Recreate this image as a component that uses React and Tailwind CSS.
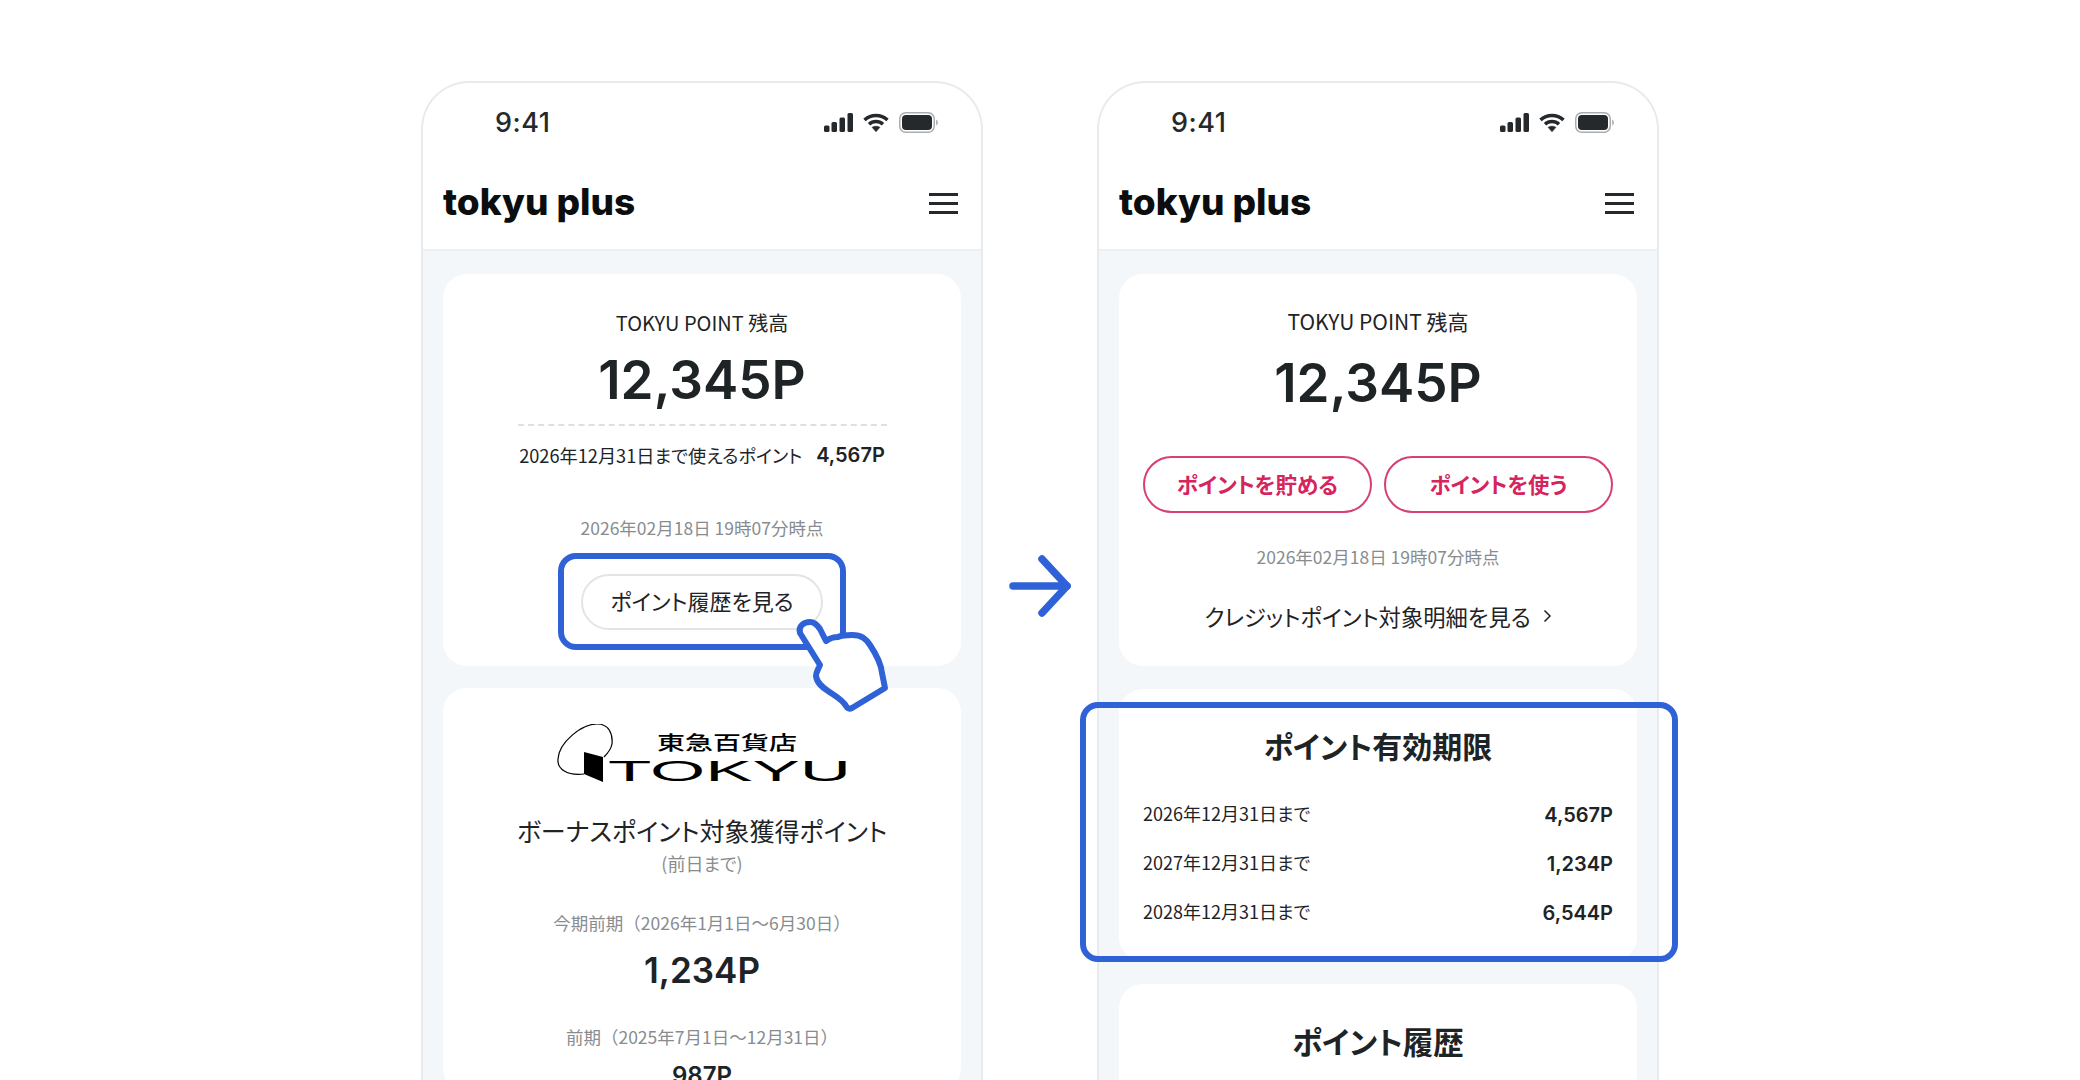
const latin = "font-['Inter','Noto_Sans_CJK_JP',sans-serif]";
const palt = "[font-feature-settings:'palt']";

function StatusBar() {
  return (
    <div className="flex h-[78px] items-center justify-between pl-[72px] pr-[43px]">
      <span className={`${latin} text-[27px] font-medium leading-none tracking-[0.5px] text-[#26292b]`}>9:41</span>
      <div className="flex items-center gap-[10px]">
        <svg width="29" height="19" viewBox="0 0 29 19" className="fill-[#26292b]">
          <rect x="0" y="12.500" width="5.500" height="6.500" rx="1.500" />
          <rect x="7.500" y="9" width="5.500" height="10" rx="1.500" />
          <rect x="15.500" y="4.500" width="5.500" height="14.500" rx="1.500" />
          <rect x="23.500" y="0" width="5.500" height="19" rx="1.500" />
        </svg>
        <svg width="26" height="19" viewBox="0 0 26 19" fill="none" className="stroke-[#26292b]">
          <path d="M1.500 7C8 .9 18 .9 24.500 7" strokeWidth="3.500" />
          <path d="M6 11.200C10 7.500 16 7.500 20 11.200" strokeWidth="3.500" />
          <path d="M9 14.300C11 12.800 15 12.800 17 14.300L13 18.800Z" className="fill-[#26292b]" strokeWidth="0.500" />
        </svg>
        <svg width="39" height="21" viewBox="0 0 39 21">
          <rect x="0.750" y="0.750" width="34.500" height="19.500" rx="6" fill="none" stroke="#a9adb0" strokeWidth="1.500" />
          <rect x="3" y="3" width="30" height="15" rx="4" className="fill-[#26292b]" />
          <path d="M37 7.500C38 7.800 39 9 39 10.500C39 12 38 13.200 37 13.500Z" fill="#b5b8ba" />
        </svg>
      </div>
    </div>
  );
}

function Header() {
  return (
    <div className="flex h-[90px] items-center justify-between border-b-2 border-[#edf0f2] pl-[20px] pr-[23px]">
      <span className="-mt-[8px] font-['Inter',sans-serif] text-[37px] font-extrabold leading-none tracking-[0px] text-[#0c0d0e]">tokyu plus</span>
      <div className="-mt-[3px] flex w-[29px] flex-col gap-[6px]">
        <div className="h-[3px] bg-[#26292b]" />
        <div className="h-[3px] bg-[#26292b]" />
        <div className="h-[3px] bg-[#26292b]" />
      </div>
    </div>
  );
}

function Hand() {
  return (
    <svg width="120" height="130" viewBox="0 0 120 130" className="absolute left-[199px] top-[17px]">
      <path
        d="M20 42C18 35 24 31 30 31C35 31 38 35 40 38L46 50C50 47 54 46 58 46C62 44 68 44 72 44C82 44 86 48 90 54C96 63 101 72 102 82L105 97L72 117Q68 119 66 115C62 108 55 105 48 100C42 96 37 92 36 85C36 81 38 79 40 74Z"
        fill="#ffffff"
        stroke="#2f62d6"
        strokeWidth="6"
        strokeLinejoin="round"
      />
    </svg>
  );
}

function TokyuLogo() {
  return (
    <svg width="296" height="66" viewBox="0 0 296 66" className="ml-[114px] block">
      <path d="M27 50C10 52 0 45 1 35C2 18 25 0 40 0C52 0 56 10 55 20C54 26 50 30 47 33" fill="none" stroke="#000000" strokeWidth="1.200" />
      <path d="M27 28L46 33V58L27 50Z" fill="#000000" />
      <text x="100" y="26" textLength="140" lengthAdjust="spacingAndGlyphs" className="font-['Noto_Sans_CJK_JP',sans-serif] fill-black text-[19px] font-medium">東急百貨店</text>
      <text x="51" y="57" textLength="243" lengthAdjust="spacingAndGlyphs" className="font-['Liberation_Sans',sans-serif] fill-black text-[30px]">TOKYU</text>
    </svg>
  );
}

function LeftPhone() {
  return (
    <div className="h-[1100px] w-[562px] shrink-0 rounded-t-[48px] border-2 border-b-0 border-[#e8ebee] bg-white">
      <StatusBar />
      <Header />
      <div className="flex h-full flex-col gap-[22px] bg-[#f4f7f9] px-[20px] pt-[23px]">
        <section className="rounded-[24px] bg-white pb-[36px] pt-[35px] text-center">
          <p className="text-[20px] leading-[28px]">TOKYU POINT 残高</p>
          <p className={`${latin} mt-[11px] text-[53px] font-semibold leading-[64px]`}>12,345P</p>
          <div className="mx-auto mt-[12px] w-[369px] border-t-2 border-dashed border-[#dddfe1]" />
          <div className="mt-[15px] flex items-center justify-center gap-[14px] leading-[28px]">
            <span className="text-[18.200px]">2026年12月31日まで使えるポイント</span>
            <span className={`${latin} text-[20px] font-semibold`}>4,567P</span>
          </div>
          <p className="mt-[47px] text-[17.500px] leading-[24px] text-[#888c8f]">2026年02月18日 19時07分時点</p>
          <div className="relative mx-auto mt-[34px] w-[242px]">
            <div className="flex h-[56px] items-center justify-center rounded-full border-2 border-[#e3e4e5] pb-[4px] text-[22px]">ポイント履歴を見る</div>
            <div className="absolute -inset-x-[23px] -bottom-[20px] -top-[21px] rounded-[18px] border-[6px] border-[#2f62d6]" />
            <Hand />
          </div>
        </section>
        <section className="rounded-[24px] bg-white pt-[36px] text-center">
          <TokyuLogo />
          <p className="mt-[25px] text-[25px] leading-[30px]">ボーナスポイント対象獲得ポイント</p>
          <p className="mt-[6px] text-[18px] leading-[24px] text-[#888c8f]">(前日まで)</p>
          <p className="mt-[36px] text-[17.500px] leading-[24px] text-[#888c8f] [font-feature-settings:normal]">今期前期（2026年1月1日〜6月30日）</p>
          <p className={`${latin} mt-[13px] text-[35px] font-semibold leading-[44px]`}>1,234P</p>
          <p className="mt-[33px] text-[17.500px] leading-[24px] text-[#888c8f] [font-feature-settings:normal]">前期（2025年7月1日〜12月31日）</p>
          <p className={`${latin} mt-[11px] text-[24px] font-semibold leading-[32px]`}>987P</p>
        </section>
      </div>
    </div>
  );
}

function PinkButton({ label }) {
  return (
    <div className="flex h-[57px] w-[229px] items-center justify-center rounded-full border-2 border-[#d8406f] text-[21.500px] font-bold text-[#d6245c]">
      {label}
    </div>
  );
}

const limits = [
  { date: "2026年12月31日まで", point: "4,567P" },
  { date: "2027年12月31日まで", point: "1,234P" },
  { date: "2028年12月31日まで", point: "6,544P" },
];

function RightPhone() {
  return (
    <div className="h-[1100px] w-[562px] shrink-0 rounded-t-[48px] border-2 border-b-0 border-[#e8ebee] bg-white">
      <StatusBar />
      <Header />
      <div className="flex h-full flex-col gap-[23px] bg-[#f4f7f9] px-[20px] pt-[23px]">
        <section className="rounded-[24px] bg-white pb-[36px] pt-[33px] text-center">
          <p className="text-[21px] leading-[28px]">TOKYU POINT 残高</p>
          <p className={`${latin} mt-[16px] text-[53px] font-semibold leading-[64px]`}>12,345P</p>
          <div className="mt-[41px] flex justify-center gap-[12px]">
            <PinkButton label="ポイントを貯める" />
            <PinkButton label="ポイントを使う" />
          </div>
          <p className="mt-[32px] text-[17.500px] leading-[24px] text-[#888c8f]">2026年02月18日 19時07分時点</p>
          <div className="mt-[33px] flex items-center justify-center gap-[12px] text-[22.300px] leading-[28px]">
            <span>クレジットポイント対象明細を見る</span>
            <svg width="9" height="14" viewBox="0 0 9 14" fill="none" stroke="#1e2326" strokeWidth="1.500">
              <path d="M1.500 1.500L7 7L1.500 12.500" />
            </svg>
          </div>
        </section>
        <section className="relative rounded-[24px] bg-white px-[24px] pb-[24px] pt-[36px]">
          <h2 className="text-center text-[30px] font-bold leading-[40px]">ポイント有効期限</h2>
          <div className="mt-[25px]">
            {limits.map((row) => (
              <div key={row.date} className="flex h-[49px] items-center justify-between">
                <span className="pb-[2px] text-[18px]">{row.date}</span>
                <span className={`${latin} pt-[1px] text-[20px] font-semibold`}>{row.point}</span>
              </div>
            ))}
          </div>
          <div className="absolute -bottom-[1px] -left-[39px] -right-[41px] top-[13px] rounded-[18px] border-[6px] border-[#2f62d6]" />
        </section>
        <section className="rounded-[24px] bg-white pb-[60px] pt-[37px]">
          <h2 className="text-center text-[30.500px] font-bold leading-[40px]">ポイント履歴</h2>
        </section>
      </div>
    </div>
  );
}

export default function App() {
  return (
    <div className={`flex h-[1080px] justify-center overflow-hidden bg-white pt-[81px] font-['Noto_Sans_CJK_JP',sans-serif] text-[#1e2326] ${palt}`}>
      <LeftPhone />
      <div className="flex w-[114px] shrink-0 justify-center pt-[474px]">
        <svg width="62" height="62" viewBox="0 0 62 62" fill="none" stroke="#2f62d6" strokeWidth="7.500" strokeLinecap="round" strokeLinejoin="round">
          <path d="M4 31H58" />
          <path d="M33 4L58 31L33 58" />
        </svg>
      </div>
      <RightPhone />
    </div>
  );
}
